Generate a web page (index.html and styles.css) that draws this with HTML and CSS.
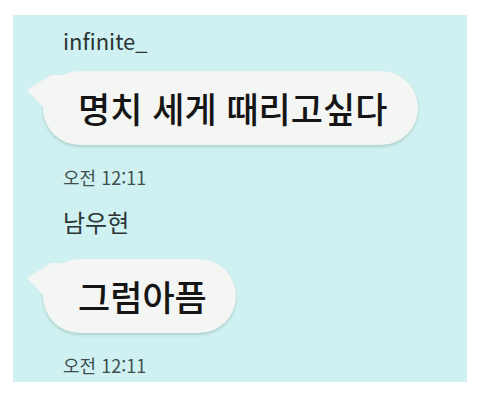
FILE: index.html
```html
<!DOCTYPE html>
<html lang="ko">
<head>
  <meta charset="UTF-8">
  <title>Chat</title>
  <link rel="stylesheet" href="styles.css">
</head>
<body>
  <div class="chat">
    <div class="name">infinite_</div>
    <div class="bubble">명치 세게 때리고싶다</div>
    <div class="time">오전 12:11</div>

    <div class="name name-ko">남우현</div>
    <div class="bubble bubble-low">그럼아픔</div>
    <div class="time">오전 12:11</div>
  </div>
</body>
</html>
```

FILE: styles.css
```css
* {
  box-sizing: border-box;
}

body {
  margin: 0;
  background: #fff;
  font-family: 'Noto Sans CJK KR', 'Noto Sans', sans-serif;
}

.chat {
  margin: 15px 13px;
  width: 454px;
  height: 367px;
  background: #cff1f1;
  padding-top: 11px;
  display: flex;
  flex-direction: column;
  align-items: flex-start;
}

.name {
  margin-left: 50px;
  font-size: 22px;
  line-height: 28px;
  color: #2b3434;
}

.name-ko {
  font-size: 24px;
  line-height: 30px;
  margin-top: 18px;
}

.bubble {
  position: relative;
  margin-left: 30px;
  margin-top: 17px;
  height: 74px;
  padding: 0 31px 0 35px;
  border-radius: 37px;
  background: #f4f6f4;
  box-shadow: 0 2px 3px rgba(80, 120, 110, 0.25);
  font-size: 35px;
  font-weight: 500;
  line-height: 74px;
  color: #151515;
}

.bubble-low {
  margin-top: 22px;
  padding-right: 29px;
}

.bubble::before {
  content: "";
  position: absolute;
  left: -16px;
  top: 4px;
  width: 40px;
  height: 36px;
  background: #f4f6f4;
  clip-path: polygon(0 42%, 60% 0, 100% 0, 100% 100%, 50% 100%);
}

.time {
  margin-left: 50px;
  margin-top: 20px;
  font-size: 18px;
  line-height: 24px;
  color: #3f4f4f;
}
```
